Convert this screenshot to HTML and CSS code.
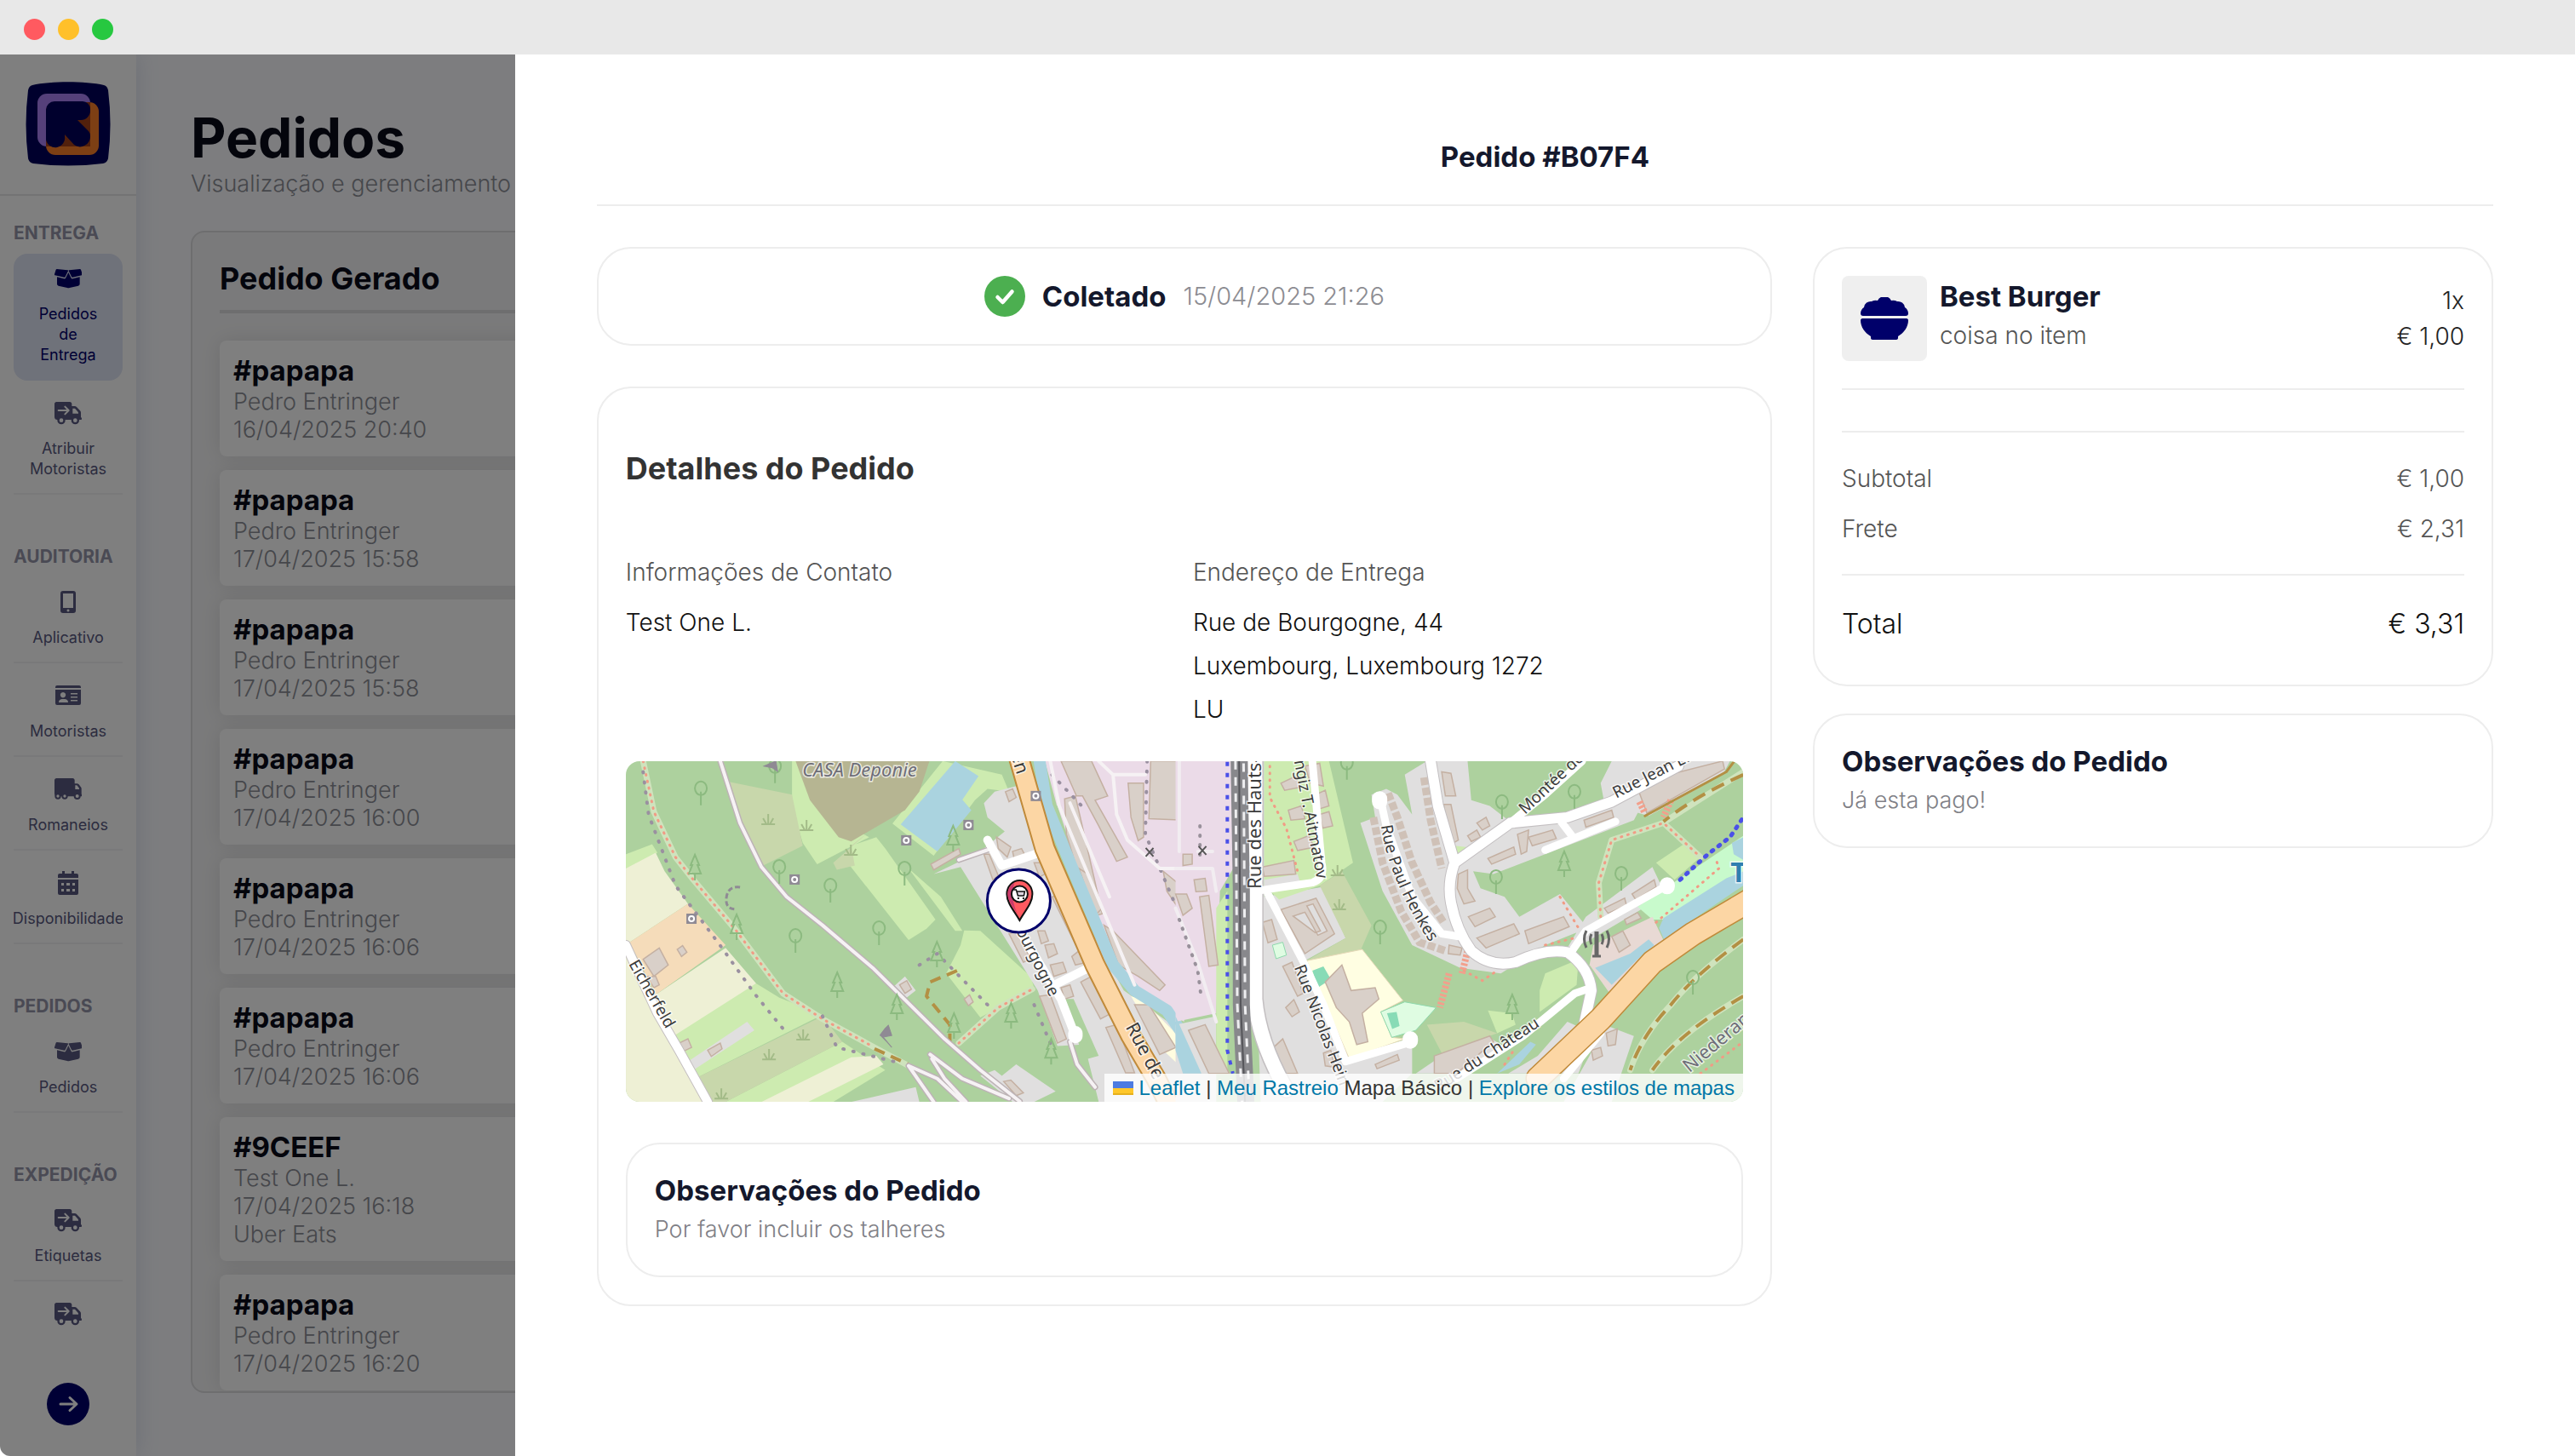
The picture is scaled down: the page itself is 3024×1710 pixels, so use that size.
FILE: index.html
```html
<!DOCTYPE html>
<html lang="pt">
<head>
<meta charset="utf-8">
<meta name="viewport" content="width=device-width, initial-scale=1">
<title>Pedidos</title>
<link rel="stylesheet" href="styles.css">
</head>
<body>
<svg class="sprite" aria-hidden="true">
  <symbol id="i-box" viewBox="24 21 96 96"><path d="M32 36l38 4c2 0 3 1 2 3L62 63c-1 2-2 2-4 2l-32-7c-2 0-3-2-2-4l5-16c1-1 2-2 3-2zM114 36l-38 4c-2 0-3 1-2 3l10 20c1 2 2 2 4 2l32-7c2 0 3-2 2-4l-5-16c-1-1-2-2-3-2z"/><path d="M33 64l24 6c3 1 5 0 6-2l10-20 10 20c1 2 3 3 6 2l24-6v24c0 4-2 6-5 7l-31 7c-3 1-5 1-8 0l-31-7c-3-1-5-3-5-7z"/></symbol>
  <symbol id="i-ship" viewBox="24 30 96 96"><path d="M31 39h47c4 0 7 3 7 7v8h10c3 0 5 1 7 3l12 13c2 2 3 4 3 7v17c4 0 4 8 0 8h-7H34c-6 0-10-4-10-10V46c0-4 3-7 7-7z"/><path d="M88 62h8l12 14v4H88z" fill="#fff"/><path d="M38 69h34M61 56l13 13-13 13" fill="none" stroke="#fff" stroke-width="6" stroke-linecap="round" stroke-linejoin="round"/><circle cx="48" cy="104" r="14"/><circle cx="97" cy="104" r="14"/><circle cx="48" cy="104" r="7" fill="#fff"/><circle cx="97" cy="104" r="7" fill="#fff"/></symbol>
  <symbol id="i-truck" viewBox="24 30 96 96"><path d="M31 39h57c4 0 7 3 7 7v12h8c3 0 5 1 7 3l6 8c2 2 3 4 3 7v19c4 0 4 8 0 8H34c-6 0-10-4-10-10V46c0-4 3-7 7-7z"/><path d="M97 64h6l8 10v4H97z" fill="#fff"/><circle cx="36" cy="102" r="11"/><circle cx="60" cy="102" r="11"/><circle cx="104" cy="102" r="12"/><g fill="#fff"><circle cx="36" cy="102" r="5"/><circle cx="60" cy="102" r="5"/><circle cx="104" cy="102" r="6"/></g></symbol>
  <symbol id="i-phone" viewBox="0 0 32 32"><path fill-rule="evenodd" d="M10 3h12a3 3 0 0 1 3 3v20a3 3 0 0 1-3 3H10a3 3 0 0 1-3-3V6a3 3 0 0 1 3-3zm0 3v17h12V6zm6 18.500a1.500 1.500 0 1 0 .01 0z"/></symbol>
  <symbol id="i-card" viewBox="0 0 32 32"><path fill-rule="evenodd" d="M3 4h26a2 2 0 0 1 2 2v1H1V6a2 2 0 0 1 2-2zM1 9h30v16a2 2 0 0 1-2 2H3a2 2 0 0 1-2-2zm9 3a3.200 3.200 0 1 0 .01 0zM5 24h11c0-3-2-4-4-4H9c-2 0-4 1-4 4zm14-11v1.500h8V13zm0 4v1.500h8V17zm0 4v1.500h8V21z"/></symbol>
  <symbol id="i-cal" viewBox="0 0 32 32"><path fill-rule="evenodd" d="M9 2h3v3h8V2h3v3h3a2 2 0 0 1 2 2v3H4V7a2 2 0 0 1 2-2h3zM4 12h24v16a2 2 0 0 1-2 2H6a2 2 0 0 1-2-2zm4 4v3h3v-3zm6 0v3h4v-3zm7 0v3h3v-3zM8 23v3h3v-3zm6 0v3h4v-3zm7 0v3h3v-3z"/></symbol>
</svg>

<header class="titlebar">
  <span class="dot dot-close"></span><span class="dot dot-min"></span><span class="dot dot-max"></span>
</header>

<div class="app">
  <aside class="sidebar">
    <div class="brand">
      <svg class="logo" viewBox="0 0 100 100" role="img" aria-label="Logo">
        <path d="M8 4C30-1 70-1 92 4q4 1 5 6 5 40 0 80-1 5-6 6-41 5-82 0-5-1-6-6-5-40 0-80 1-5 5-6z" fill="#00005a"/>
        <rect x="14" y="14" width="62" height="62" rx="11" fill="#aa80f4"/>
        <rect x="24" y="24" width="62" height="62" rx="11" fill="#fa7e28"/>
        <path d="M24 35a11 11 0 0 1 11-11h41v52H24z" fill="#a44018"/>
        <path d="M34 23h33a9 9 0 0 1 9 9v2a11 11 0 0 1-11 11h-4L74 58a9 9 0 0 1 2 6 12 12 0 0 1-19 10L46 62v2a11 11 0 0 1-22 4V33a10 10 0 0 1 10-10z" fill="#00005a"/>
      </svg>
    </div>
    <nav class="nav">
      <section class="nav-group">
        <h2 class="nav-title">ENTREGA</h2>
        <a class="nav-item active" href="#"><svg class="icon"><use href="#i-box"/></svg><span>Pedidos<br>de<br>Entrega</span></a>
        <a class="nav-item" href="#"><svg class="icon"><use href="#i-ship"/></svg><span>Atribuir<br>Motoristas</span></a>
      </section>
      <section class="nav-group">
        <h2 class="nav-title">AUDITORIA</h2>
        <a class="nav-item" href="#"><svg class="icon"><use href="#i-phone"/></svg><span>Aplicativo</span></a>
        <a class="nav-item" href="#"><svg class="icon"><use href="#i-card"/></svg><span>Motoristas</span></a>
        <a class="nav-item" href="#"><svg class="icon"><use href="#i-truck"/></svg><span>Romaneios</span></a>
        <a class="nav-item" href="#"><svg class="icon"><use href="#i-cal"/></svg><span>Disponibilidade</span></a>
      </section>
      <section class="nav-group">
        <h2 class="nav-title">PEDIDOS</h2>
        <a class="nav-item" href="#"><svg class="icon"><use href="#i-box"/></svg><span>Pedidos</span></a>
      </section>
      <section class="nav-group">
        <h2 class="nav-title">EXPEDIÇÃO</h2>
        <a class="nav-item" href="#"><svg class="icon"><use href="#i-ship"/></svg><span>Etiquetas</span></a>
        <a class="nav-item" href="#"><svg class="icon"><use href="#i-ship"/></svg></a>
      </section>
    </nav>
    <div class="sidebar-foot">
      <button class="expand" type="button" aria-label="Expandir">
        <svg viewBox="0 0 50 50" width="50" height="50"><path d="M16 25h18M27 17.500l8 7.500-8 7.500" fill="none" stroke="#fff" stroke-width="3" stroke-linecap="round" stroke-linejoin="round"/></svg>
      </button>
    </div>
  </aside>

  <main class="main">
    <h1 class="page-title">Pedidos</h1>
    <p class="page-sub">Visualização e gerenciamento dos pedidos</p>
    <section class="column">
      <h2 class="column-title">Pedido Gerado</h2>
      <article class="order"><h3>#papapa</h3><p>Pedro Entringer</p><p>16/04/2025 20:40</p></article>
      <article class="order"><h3>#papapa</h3><p>Pedro Entringer</p><p>17/04/2025 15:58</p></article>
      <article class="order"><h3>#papapa</h3><p>Pedro Entringer</p><p>17/04/2025 15:58</p></article>
      <article class="order"><h3>#papapa</h3><p>Pedro Entringer</p><p>17/04/2025 16:00</p></article>
      <article class="order"><h3>#papapa</h3><p>Pedro Entringer</p><p>17/04/2025 16:06</p></article>
      <article class="order"><h3>#papapa</h3><p>Pedro Entringer</p><p>17/04/2025 16:06</p></article>
      <article class="order"><h3>#9CEEF</h3><p>Test One L.</p><p>17/04/2025 16:18</p><p>Uber Eats</p></article>
      <article class="order"><h3>#papapa</h3><p>Pedro Entringer</p><p>17/04/2025 16:20</p></article>
    </section>
  </main>

  <div class="backdrop"></div>

  <section class="drawer" role="dialog" aria-labelledby="drawer-title">
    <h2 class="drawer-title" id="drawer-title">Pedido #B07F4</h2>
    <div class="drawer-grid">
      <div class="left">
        <div class="card status">
          <svg class="check" viewBox="0 0 48 48"><circle cx="24" cy="24" r="24" fill="#4caf50"/><path d="M15.500 25l6 6 11-12.500" fill="none" stroke="#fff" stroke-width="4.500" stroke-linecap="round" stroke-linejoin="round"/></svg>
          <strong>Coletado</strong>
          <time datetime="2025-04-15T21:26">15/04/2025 21:26</time>
        </div>

        <div class="card details">
          <h3 class="details-title">Detalhes do Pedido</h3>
          <div class="info">
            <div><h4>Informações de Contato</h4><p>Test One L.</p></div>
            <div><h4>Endereço de Entrega</h4><p>Rue de Bourgogne, 44</p><p>Luxembourg, Luxembourg 1272</p><p>LU</p></div>
          </div>

          <div class="map">
            <svg class="map-canvas" viewBox="0 0 1311 400" preserveAspectRatio="xMidYMid slice" role="img" aria-label="Mapa">
              <defs>
                <g id="t-round" fill="none" stroke="#8cba80" stroke-width="2"><ellipse cx="0" cy="-8" rx="7" ry="8"/><path d="M0-4V12"/></g>
                <g id="t-pine" fill="none" stroke="#8cba80" stroke-width="2"><path d="M0-16L-5-4h2L-7 6H7L3-4h2zM0 6v8"/></g>
                <g id="t-grass" fill="none" stroke="#a3bb88" stroke-width="2"><path d="M-8 6H8M0 6V-6M-2 6l-4-7M2 6l4-7"/></g>
                <g id="t-sq"><rect x="-6" y="-6" width="12" height="12" fill="#8f8a94"/><circle r="3" fill="none" stroke="#fff" stroke-width="2"/></g>
                <path id="p-henkes" d="M886 76Q896 144 952 226"/>
              </defs>
              <rect width="1311" height="400" fill="#add19e"/>

              <!-- western half -->
              <g class="geo" transform="translate(-5 -14) scale(.4209 .3333)">
                <path fill="#cdebb0" d="M12 370L85 335 100 365 12 425zM140 1000L375 825 440 875 560 935 205 1160zM290 1242L615 1030 735 1130 590 1242zM475 42H525L600 250 690 310 545 405 505 330 475 200zM640 340L710 310 735 350 875 600 850 632 800 672 630 400zM955 638L1000 640 1140 800 1150 840 1000 945 905 790 945 690zM895 42L1060 90 1080 150 1020 140 985 180 870 375 755 262zM800 420L890 520 950 640 930 640z"/>
                <path fill="#eef0d5" d="M12 420L95 365 120 430 185 545 22 680H12zM12 700L95 865 290 700 375 825 145 1010 245 1242H12zM390 1242L640 1085 710 1080 730 1110 520 1242z"/>
                <path fill="#f5dcba" d="M22 680L185 545 290 690 95 865 70 800z"/>
                <path fill="#c8d7ab" d="M205 1160L560 940 615 1030 290 1242H240zM300 115L475 160 505 340 395 410 345 300zM690 290L640 340 650 410 600 425 590 400z"/>
                <path fill="#b6b592" d="M485 42H858L830 150 790 215 640 325 605 310 525 180z"/>
                <path fill="#aad3df" d="M930 42L995 95 950 178 975 215 880 360 778 265z"/>
                <path fill="#e0dfdf" d="M1100 130L1040 150 1010 190 1020 240 1068 290 1010 350 935 400 870 440 945 415 1160 850 1215 1045 1290 1040 1230 880 1260 880 1330 1080 1300 1090 1330 1242H1568V1000L1400 850 1180 350zM1000 1150L1040 1130 1060 1150 1100 1110 1210 1205 1150 1242H1090zM640 1242L820 1190 830 1242zM185 1100L350 960 370 990 200 1130zM755 840L790 800 820 850 790 880z"/>
                <path fill="#ebdbe8" d="M1180 42H1568V960L1480 880 1390 790 1260 420z"/>
                <path fill="#add19e" d="M1190 180L1215 200 1270 410 1255 420zM1240 900L1300 1030 1280 1060z"/>
                <path fill="#fffde0" d="M1420 870L1450 880 1568 1030V1130L1510 1060z"/>
                <g fill="#d9d0c9" stroke="#c4b0a2" stroke-width="1.500">
                  <path d="M1225 42H1310L1355 165 1320 180 1410 380 1380 395 1330 270 1285 165 1268 165zM1475 42H1568V250L1470 245zM1412 120H1455V310L1440 322 1420 240zM1235 175L1265 165 1340 580 1310 590 1240 300zM1345 620L1370 640 1515 830 1500 850 1440 800 1385 760zM1275 420L1300 440 1340 560 1320 585zM1510 430L1568 490V590L1520 500zM1430 900L1470 900 1545 1050 1500 1075z"/>
                  <path d="M1045 310L1085 345 1075 380 1050 350zM1090 360L1115 350 1125 375 1095 390zM1070 150L1090 140 1100 170 1080 185zM1010 370L1025 370 1050 445 1035 460zM1150 400L1170 400 1180 440 1165 450zM1160 640L1180 640 1190 675 1170 685zM1180 690L1205 685 1215 720 1190 735zM1195 760L1230 750 1240 785 1205 800zM1080 650L1105 640 1140 740 1120 750zM1255 730L1285 700 1300 750 1265 760zM1165 870L1195 865 1240 1020 1215 1035zM1225 840L1250 830 1260 870 1235 880zM1280 820L1310 800 1365 930 1335 950zM1350 980L1380 970 1430 1140 1405 1140zM1200 520L1220 515 1290 690 1270 700zM862 405L940 350 945 370 870 425zM60 740L105 700 130 760 90 800zM155 705L170 692 182 715 167 730zM70 800L95 800 105 830 90 840zM160 1035L185 1020 195 1050 170 1065zM775 830L795 815 808 845 790 860zM955 880L970 865 980 890 967 903zM240 1060L275 1035 280 1055 250 1082zM1065 1170L1085 1165 1120 1210 1100 1220z"/>
                </g>
                <g fill="none" stroke-linejoin="round" stroke-linecap="round">
                  <path stroke="#aad3df" stroke-width="14" d="M1165 42L1185 200 1260 430 1370 760 1430 850 1520 920 1568 1010"/>
                  <path stroke="#cfe3bd" stroke-width="7" d="M60 42L90 220 150 380 200 460 320 640 450 860 560 950 690 1040 800 1115M940 1035L1050 910 1145 845"/>
                  <path stroke="#f19b85" stroke-width="3" stroke-dasharray="1 7" d="M60 42L90 220 150 380 200 460 320 640 450 860 560 950 690 1040M940 1035L1050 910 1145 845"/>
                  <path stroke="#9a90a0" stroke-width="4" stroke-dasharray="1 11" d="M60 80L75 230 150 480 280 700 370 860 460 1000M560 940L600 1050 760 1100M830 760L880 720 1020 900M1150 900L1200 1050M1200 90L1290 210M1465 42L1460 300 1568 620"/>
                  <path stroke="#b39044" stroke-width="4" stroke-dasharray="13 8" stroke-linecap="butt" d="M935 780L860 820 850 870 915 970V1040M705 1055L800 1110"/>
                  <path stroke="#bdb3b6" stroke-width="7" d="M275 42L330 260 390 415 460 520 560 620 700 770 900 1020 1000 1130 1110 1240M860 1075L950 1160 1080 1230M865 1090L900 1160 960 1242M800 1115L870 1242M800 1115L880 1160 950 1242M1250 1030L1270 1110 1320 1190M940 390L1020 355"/>
                  <path stroke="#f6f2f4" stroke-width="4" d="M275 42L330 260 390 415 460 520 560 620 700 770 900 1020 1000 1130 1110 1240M860 1075L950 1160 1080 1230M865 1090L900 1160 960 1242M800 1115L870 1242M800 1115L880 1160 950 1242M1250 1030L1270 1110 1320 1190M940 390L1020 355M1195 42L1220 200 1340 560 1430 830M1330 42L1370 90 1460 90M1370 90L1380 230 1410 320 1500 420 1568 420M1250 190L1360 520"/>
                  <path stroke="#c4bfc0" stroke-width="12" d="M12 690L100 930 160 1060 240 1242"/>
                  <path stroke="#fff" stroke-width="10" d="M12 690L100 930 160 1060 240 1242M1020 320L1060 410 1165 365M1110 640L1225 880 1265 1010M1215 825L1310 765"/>
                  <path stroke="#fff" stroke-width="17" d="M1265 1000V1010"/>
                  <path stroke="#c08a3a" stroke-width="25" d="M1105 20L1180 350 1320 760 1420 1010 1490 1160 1530 1260"/>
                  <path stroke="#fcd6a4" stroke-width="21" d="M1105 20L1180 350 1320 760 1420 1010 1490 1160 1530 1260"/>
                </g>
              </g>

              <!-- eastern half -->
              <g class="geo" transform="translate(645 -14) scale(.4337 .3333)">
                <path fill="#ebdbe8" d="M0 42H165V400L120 500 110 930 0 960z"/>
                <path fill="#e0dfdf" d="M0 970L110 940V1242H0zM200 42H240V520L400 485 460 665 350 745 480 1090 640 1040 640 1142 560 1242H230zM500 260L540 240 530 160 570 140 600 160 640 230 620 90 680 42H790L800 180 850 200 920 270 1180 190 1260 200 1240 250 860 440 805 430 825 490 890 520 930 590 1040 510 1115 630 1000 690 880 790 770 770 640 690 560 500zM1150 120L1180 42H1500L1480 90 1280 235 1160 190zM1110 590L1290 415 1310 470 1340 500 1240 580 1110 680 1060 700zM980 1080L1060 960 1130 1000 1090 1142 900 1142zM1120 1080L1160 970 1240 1010 1180 1242H1050zM720 1080L830 1000 880 1040 800 1142H650z"/>
                <path fill="#cdebb0" d="M240 42H415L480 400 390 480 280 530 240 480zM1300 400L1380 330 1420 380 1350 460zM1000 790L1090 740 1085 830 985 925 985 850zM845 920L910 930 920 970 870 1000zM755 340L790 345 780 380 755 370zM110 560L140 500V1142H110z"/>
                <path fill="#e0dfdf" d="M240 460L330 440 340 480 240 490z"/>
                <path fill="#c8d7ab" d="M390 480L450 430 530 620 500 710 355 745 460 665zM680 970L780 960 870 1000 720 1070z"/>
                <path fill="#fffee2" stroke="#e6d9b8" d="M355 745L505 705 615 885 555 925 585 1015 620 1020 470 1090z"/>
                <path fill="#dffce2" stroke="#8fd9ad" d="M555 925L620 890 705 910 650 990 585 1015zM262 690L290 680 300 725 272 738z"/>
                <path fill="#88dbb6" d="M370 780L400 765 420 810 385 840zM572 930L598 925 606 975 586 985z"/>
                <path fill="#c8facc" d="M1250 555L1536 305V480L1330 600 1290 600z"/>
                <path fill="#e8d9d4" d="M1130 690L1290 590 1330 700 1180 870 1120 760z"/>
                <path fill="#aad3df" d="M1308 630L1320 595 1490 455 1536 430V480L1400 600 1325 680zM1135 770L1230 720 1280 670 1295 690 1250 740 1180 830zM1505 330L1536 310V390L1510 370zM0 940L70 1142H20L0 1060zM870 1142L960 1030 975 1040 930 1110z"/>
                <g fill="#d9d0c9" stroke="#c4b0a2" stroke-width="1.500">
                  <path d="M285 565L380 525 430 650 350 720zM285 120L325 95 335 135 295 145zM350 60L390 50 400 130 365 120zM380 160L405 145 415 200 390 210zM305 215L340 200 350 245 312 250zM390 230L415 220 425 270 398 278zM320 325L360 305 375 345 330 357zM235 415L320 392 325 440 240 448zM235 610L260 600 275 670 250 682zM290 765L315 750 345 860 330 870zM298 910L320 882 335 925 315 942zM265 1050L290 1020 330 1142H290zM65 520L90 515 115 760 90 765zM50 460L80 455 85 500 55 502zM20 370L45 370 45 405 20 410zM0 510L30 510 45 560 20 585zM35 990L80 970 145 1142H90zM405 820L450 760 475 850 540 840 550 880 505 930 520 1030 490 1040 470 960 435 910zM400 1070L420 1060 430 1120 405 1115z"/>
                  <path d="M720 80L745 85 758 165 730 165zM725 195L745 195 765 320 745 335zM790 305L815 285 825 310 800 325zM815 260L840 240 850 270 830 285zM925 300L955 285 950 360 935 370zM955 310L1020 285 1030 315 965 340zM1105 250L1180 215 1185 240 1110 275zM845 385L915 345 920 370 855 405zM765 440L790 425 790 490 810 535 780 545 762 490zM792 590L850 560 865 590 810 625zM815 665L915 615 930 650 840 700zM945 640L1050 590 1065 625 955 685zM1245 120L1480 42 1485 70 1275 225zM1160 560L1215 525 1220 550 1170 578zM1235 510L1295 460 1300 485 1245 530zM1215 600L1250 575 1260 595 1220 618zM1180 660L1210 640 1230 690 1200 715zM740 690L775 700 770 725 738 720zM700 1080L850 1010 860 1030 760 1142H700zM540 1110L600 1075 605 1095 545 1125zM1165 1000L1195 985 1190 1040 1170 1045zM1125 1060L1150 1050 1155 1080 1130 1095z"/>
                </g>
                <path fill="#e0dfdf" stroke="#c4b0a2" stroke-width="1.500" d="M318 588L350 574 385 655 410 640 372 545 355 552 392 640 378 646z"/>
                <g fill="none" stroke="#cfc1b7" stroke-width="9" stroke-dasharray="9 3">
                  <path d="M535 240L560 400 610 570 660 680 730 710M575 155L600 240 640 400 690 540 725 610M672 100L690 250 720 420M1030 1060L960 1142"/>
                </g>
                <g fill="none" stroke-linejoin="round" stroke-linecap="round">
                  <path stroke="#cfe3bd" stroke-width="7" d="M1150 590L1145 470 1180 320 1320 260 1420 380M1536 80L1330 250M1536 670Q1400 800 1340 900 1260 1010 1230 1130M1536 870Q1360 1000 1290 1130"/>
                  <path stroke="#f19b85" stroke-width="3" stroke-dasharray="1 7" d="M1150 590L1145 470 1180 320 1320 260 1420 380M255 60V170L300 280 330 430M780 780L830 815 870 780M1040 520L1090 630M1000 690L1080 665M1300 610L1470 420 1460 380M890 1110L920 1050M1420 1142L1536 1030"/>
                  <path stroke="#f2a08c" stroke-width="8" stroke-dasharray="3 2" stroke-linecap="butt" d="M790 710L775 790M740 790L715 910M1340 180L1320 240M1255 185L1270 225"/>
                  <path stroke="#b39044" stroke-width="4" stroke-dasharray="16 9" stroke-linecap="butt" d="M1536 670Q1400 800 1340 900 1260 1010 1230 1130M1536 870Q1360 1000 1290 1130M1536 90Q1400 170 1320 255"/>
                  <path stroke="#b39044" stroke-width="3" d="M1270 235L1490 80 1510 45"/>
                  <path stroke="#4a50e8" stroke-width="5" stroke-dasharray="2 8" d="M1365 460L1440 370 1500 310 1536 240"/>
                  <path stroke="#c3bfc1" stroke-width="20" d="M215 20V880Q225 1030 300 1200"/>
                  <path stroke="#fff" stroke-width="17" d="M215 20V880Q225 1030 300 1200"/>
                  <path stroke="#c3bfc1" stroke-width="14" d="M690 42L710 200 755 400Q735 470 745 540 760 640 800 710 850 770 920 750 1000 700 1060 715 1120 770 1125 850L1105 970M755 400L905 260 1060 240 1180 185 1360 60"/>
                  <path stroke="#fff" stroke-width="12" d="M690 42L710 200 755 400Q735 470 745 540 760 640 800 710 850 770 920 750 1000 700 1060 715 1120 770 1125 850L1105 970M755 400L905 260 1060 240 1180 185 1360 60"/>
                  <path stroke="#fff" stroke-width="9" d="M905 260L1000 160 1100 42M1040 250L1075 310M1000 355L1190 255M555 180L570 270 640 520 720 650 770 660M1070 715L1110 640 1330 480M1125 840L1080 860 940 1010 760 1160M1150 1000L1050 1160M215 500L370 470Q405 455 395 400L370 42M250 510L350 760 400 900 460 1100 640 1030"/>
                  <path stroke="#fff" stroke-width="18" d="M552 175V185M1330 478V484M635 1020V1028"/>
                  <path stroke="#f2edf1" stroke-width="4" d="M0 420H100L110 500M100 360H60M10 42V360M0 560L60 750 110 960"/>
                  <path stroke="#99919b" stroke-width="4" stroke-dasharray="1 10" d="M66 270V400M10 600L60 780 70 880"/>
                  <path stroke="#4a50e8" stroke-width="4" stroke-dasharray="5 8" stroke-linecap="butt" d="M140 45V1060L155 1142"/>
                  <path stroke="#88888c" stroke-width="20" stroke-linecap="butt" d="M172 42L178 500V900L190 1242"/>
                  <path stroke="#eeeef0" stroke-width="3" stroke-dasharray="10 9" stroke-linecap="butt" d="M162 42L167 900 180 1242M184 50L188 900 200 1242"/>
                  <path stroke="#55555a" stroke-width="2" stroke-linecap="butt" d="M172 42L176 900 188 1242"/>
                  <path stroke="#c08a3a" stroke-width="29" d="M1570 520L1400 650 1290 750 1150 950 980 1160"/>
                  <path stroke="#fcd6a4" stroke-width="26" d="M1570 520L1400 650 1290 750 1150 950 980 1160"/>
                </g>
              </g>

              <g>
                <use href="#t-round" x="88" y="40"/><use href="#t-round" x="175" y="14"/><use href="#t-round" x="180" y="132"/><use href="#t-round" x="240" y="154"/><use href="#t-round" x="297" y="204"/><use href="#t-round" x="199" y="213"/><use href="#t-round" x="327" y="134"/>
                <use href="#t-round" x="846" y="10"/><use href="#t-round" x="885" y="203"/><use href="#t-round" x="1028" y="56"/><use href="#t-round" x="1113" y="44"/><use href="#t-round" x="1021" y="144"/><use href="#t-round" x="1168" y="140"/><use href="#t-round" x="1252" y="262"/>
                <use href="#t-pine" x="81" y="126"/><use href="#t-pine" x="130" y="196"/><use href="#t-pine" x="248" y="264"/><use href="#t-pine" x="365" y="228"/><use href="#t-pine" x="318" y="290"/><use href="#t-pine" x="385" y="312"/><use href="#t-pine" x="452" y="300"/><use href="#t-pine" x="499" y="342"/><use href="#t-pine" x="384" y="92"/><use href="#t-pine" x="1101" y="122"/><use href="#t-pine" x="1040" y="290"/>
                <use href="#t-grass" x="167" y="68"/><use href="#t-grass" x="212" y="75"/><use href="#t-grass" x="264" y="104"/><use href="#t-grass" x="208" y="321"/><use href="#t-grass" x="168" y="344"/><use href="#t-grass" x="112" y="390"/><use href="#t-grass" x="835" y="128"/><use href="#t-grass" x="837" y="168"/>
                <use href="#t-sq" x="198" y="139"/><use href="#t-sq" x="77" y="185"/><use href="#t-sq" x="329" y="93"/><use href="#t-sq" x="402" y="75"/><use href="#t-sq" x="481" y="41"/>
                <path d="M134 148q-14-2-16 12t12 14" fill="none" stroke="#8f8a94" stroke-width="3" stroke-dasharray="6 3"/>
                <path d="M298 322l6-8 4-4 4 12-10 2 10 12M162 6l14-6 2 12-6-4z" fill="#8f8a94" stroke="#8f8a94"/>
                <path d="M610 102l9 10m0-10l-9 10M672 100l9 10m0-10l-9 10" stroke="#555" stroke-width="2"/>
                <g fill="none" stroke="#666" stroke-width="3"><path stroke-width="5" d="M1139 200v28"/><path d="M1134 229h10M1133 203q-3 6 0 12M1127 199q-5 10 0 20M1145 203q3 6 0 12M1151 199q5 10 0 20"/></g>
              </g>

              <g class="map-label">
                <text class="lg soft" transform="translate(207 18)" font-style="italic">CASA Deponie</text>
                <text transform="translate(3 238) rotate(60)">Eicherfeld</text>
                <text transform="translate(452 188) rotate(63)">Bourgogne</text>
                <text class="lg" transform="translate(586 312) rotate(62)">Rue de</text>
                <text class="lg" transform="translate(451 -8) rotate(72)">en</text>
                <text class="lg" transform="translate(745 150) rotate(-90)">Rue des Hauts-</text>
                <text transform="translate(784 0) rotate(79)">ngiz T. Aitmatov</text>
                <text><textPath href="#p-henkes">Rue Paul Henkes</textPath></text>
                <text transform="translate(784 242) rotate(69)">Rue Nicolas Hein</text>
                <text transform="translate(1055 63) rotate(-43)">Montée de</text>
                <text transform="translate(1162 44) rotate(-27)">Rue Jean En</text>
                <text transform="translate(954 388) rotate(-33)">Rue du Château</text>
                <text class="lg soft" transform="translate(1248 366) rotate(-40)">Niederan</text>
                <text class="stop" transform="translate(1296 142)">T</text>
              </g>

              <g class="marker">
                <circle cx="461" cy="164" r="37" fill="#fff" stroke="#00006a" stroke-width="3"/>
                <path d="M462 187c-6-11-15-20-15-31a15 16 0 0 1 30 0c0 11-9 20-15 31z" fill="#ff5a60" stroke="#111" stroke-width="2"/>
                <path d="M460 180c-5-8-12-16-12-24a14 15 0 0 1 8-13c-4 12-2 26 4 37z" fill="#c93a6c"/>
                <circle cx="462" cy="156" r="9.500" fill="#fff" stroke="#111" stroke-width="2"/>
                <path d="M455 151h3l2 7h7l1-5h-9" fill="#ddd5e0" stroke="#111" stroke-width="1.500"/><path d="M460 160.500h1v1h-1zM466 160.500h1v1h-1z" stroke="#111"/>
              </g>
            </svg>
            <div class="attribution">
              <svg class="flag" viewBox="0 0 24 16" width="24" height="16"><path fill="#4c7be1" d="M0 0h24v8H0z"/><path fill="#ffc72a" d="M0 8h24v6H0z"/><path fill="#e6b01e" d="M0 14h24v2H0z"/></svg>
              <a href="#">Leaflet</a> | <a href="#">Meu Rastreio</a> Mapa Básico | <a href="#">Explore os estilos de mapas</a>
            </div>
          </div>

          <div class="card notes"><h3>Observações do Pedido</h3><p>Por favor incluir os talheres</p></div>
        </div>
      </div>

      <div class="right">
        <div class="card summary">
          <div class="product">
            <div class="thumb">
              <svg viewBox="0 0 56 50" width="56" height="50" fill="#00006a"><path d="M3 22c-2 0-3-1-3-3a9 9 0 0 1 4-7 8 8 0 0 1 9-7 9 8 0 0 1 7-1 9 9 0 0 1 16 0 9 8 0 0 1 7 1 8 8 0 0 1 9 7 9 9 0 0 1 4 7c0 2-1 3-3 3z"/><path d="M2 25h52c1 0 2 1 2 2 0 8-5 15-12 19v2c0 1-1 2-2 2H14c-1 0-2-1-2-2v-2C5 42 0 35 0 27c0-1 1-2 2-2z"/></svg>
            </div>
            <div class="product-name"><h3>Best Burger</h3><p>coisa no item</p></div>
            <div class="product-price"><p>1x</p><p>€ 1,00</p></div>
          </div>
          <dl class="totals">
            <div><dt>Subtotal</dt><dd>€ 1,00</dd></div>
            <div><dt>Frete</dt><dd>€ 2,31</dd></div>
            <div class="grand"><dt>Total</dt><dd>€ 3,31</dd></div>
          </dl>
        </div>
        <div class="card notes"><h3>Observações do Pedido</h3><p>Já esta pago!</p></div>
      </div>
    </div>
  </section>
</div>
</body>
</html>
```
FILE: styles.css
```css
* { box-sizing: border-box; }
h1, h2, h3, h4, p, dl, dd { margin: 0; }

body {
  margin: 0;
  height: 100vh;
  display: flex;
  flex-direction: column;
  overflow: hidden;
  background: #fff;
  color: #14182c;
  font-family: "Inter", "Liberation Sans", sans-serif;
  font-weight: 300;
  font-size: 28px;
  line-height: 40px;
}

.sprite { display: none; }

.titlebar {
  flex: none;
  height: 64px;
  padding: 4px 28px 0;
  display: flex;
  align-items: center;
  gap: 15px;
  background: #e8e8e8;
}
.dot { width: 25px; height: 25px; border-radius: 50%; }
.dot-close { background: #ff5a60; }
.dot-min { background: #ffc02a; }
.dot-max { background: #27c840; }

.app {
  position: relative;
  flex: 1;
  min-height: 0;
  display: flex;
  overflow: hidden;
  background: #fafbff;
  border-radius: 0 0 0 12px;
}

/* sidebar */
.sidebar {
  flex: none;
  width: 160px;
  display: flex;
  flex-direction: column;
  background: #fff;
  box-shadow: 0 0 24px rgba(120, 140, 180, .25);
}
.brand {
  padding: 32px 30px;
  border-bottom: 2px solid #e6e6e8;
}
.logo { display: block; width: 100px; height: 100px; }
.nav {
  flex: 1;
  min-height: 0;
  overflow: hidden;
  padding: 32px 16px 0;
  display: flex;
  flex-direction: column;
  gap: 61px;
}
.nav-group { flex: none; }
.nav-title {
  margin-bottom: 12px;
  color: #9494a8;
  font-size: 21px;
  font-weight: 700;
  line-height: 24px;
}
.nav-item {
  display: flex;
  flex-direction: column;
  align-items: center;
  gap: 14px;
  padding: 13px 0 16px;
  border-bottom: 2px solid #f2f2f4;
  overflow: hidden;
  color: #585880;
  font-size: 18px;
  font-weight: 400;
  line-height: 24px;
  text-align: center;
  text-decoration: none;
}
.nav-item + .nav-item { margin-top: 9px; }
.nav-item.active {
  background: #dfe4f4;
  border-color: transparent;
  border-radius: 16px;
  color: #00006a;
}
.icon { width: 32px; height: 32px; fill: currentColor; }
.sidebar-foot {
  flex: none;
  height: 136px;
  padding-bottom: 36px;
  display: flex;
  align-items: flex-end;
  justify-content: center;
}
.expand {
  width: 50px;
  height: 50px;
  padding: 0;
  border: 0;
  border-radius: 50%;
  background: #00006a;
}
.expand svg { display: block; }

/* orders board */
.main {
  flex: 1;
  min-width: 0;
  display: flex;
  flex-direction: column;
  padding: 58px 64px 74px;
}
.page-title {
  color: #080a18;
  font-size: 64px;
  font-weight: 700;
  line-height: 80px;
}
.page-sub {
  margin-bottom: 42px;
  color: #8c8e96;
  font-size: 27px;
  line-height: 27px;
  white-space: nowrap;
}
.column {
  flex: 1;
  min-height: 0;
  overflow: hidden;
  display: flex;
  flex-direction: column;
  gap: 16px;
  padding: 32px;
  border: 2px solid #dcdcdf;
  border-radius: 16px;
  background: #f5f5f6;
}
.column-title {
  margin-bottom: 16px;
  padding-bottom: 15px;
  border-bottom: 4px solid #dcdcdf;
  color: #080a18;
  font-size: 36px;
  font-weight: 700;
  line-height: 44px;
}
.order {
  flex: none;
  padding: 15px 16px;
  border-radius: 8px;
  background: #fff;
  box-shadow: 0 0 24px rgba(0, 0, 0, .1);
  color: #8c8e96;
  font-size: 27px;
  line-height: 33px;
}
.order h3 {
  color: #080a18;
  font-size: 33px;
  font-weight: 700;
  line-height: 40px;
}

.backdrop {
  position: absolute;
  inset: 0;
  background: rgba(0, 0, 0, .5);
}

/* order drawer */
.drawer {
  position: absolute;
  top: 0;
  right: 0;
  bottom: 0;
  width: 80%;
  padding: 100px 96px 96px;
  overflow: hidden;
  background: #fff;
}
.drawer-title {
  margin-bottom: 48px;
  padding-bottom: 36px;
  border-bottom: 2px solid #ededed;
  font-size: 33px;
  font-weight: 700;
  text-align: center;
}
.drawer-grid {
  display: grid;
  grid-template-columns: minmax(0, 19fr) minmax(0, 11fr);
  gap: 48px;
  align-items: start;
}
.left { display: flex; flex-direction: column; gap: 48px; }
.right { display: flex; flex-direction: column; gap: 32px; }

.card {
  padding: 32px;
  border: 2px solid #ededed;
  border-radius: 40px;
}
.card h3 { font-size: 33px; font-weight: 700; }

.status {
  display: flex;
  align-items: center;
  justify-content: center;
  gap: 20px;
}
.status strong { font-size: 33px; font-weight: 700; }
.status time { color: #8c8c92; font-size: 29px; }
.check { width: 48px; height: 48px; }

.details { padding-top: 72px; }
.card .details-title {
  margin-bottom: 80px;
  color: #333;
  font-size: 36px;
  line-height: 44px;
}
.info {
  display: grid;
  grid-template-columns: 1fr 1fr;
  gap: 20px;
  margin-bottom: 35px;
}
.info h4 {
  margin-bottom: 14px;
  color: #555;
  font-size: 28px;
  font-weight: 300;
}
.info p { color: #111; line-height: 51px; }

.map {
  position: relative;
  height: 400px;
  margin-bottom: 48px;
  overflow: hidden;
  border-radius: 16px;
}
.map-canvas { display: block; width: 100%; height: 100%; }
.geo path { vector-effect: non-scaling-stroke; }
.map-label {
  fill: #3c3c3c;
  stroke: #fff;
  stroke-width: 3px;
  stroke-opacity: .7;
  paint-order: stroke;
  font-family: "Noto Sans", sans-serif;
  font-size: 19px;
  font-weight: 400;
}
.map-label .lg { font-size: 22px; }
.map-label .soft { fill: #6e6e78; }
.map-label .stop { fill: #2f7fb0; font-size: 33px; font-weight: 700; }
.attribution {
  position: absolute;
  right: 0;
  bottom: 0;
  padding: 0 10px;
  background: rgba(255, 255, 255, .8);
  color: #333;
  font: 24px/33px "Liberation Sans", Arial, sans-serif;
}
.attribution a { color: #0078a8; text-decoration: none; }

.notes { padding: 34px 32px; }
.notes p { margin-top: 6px; color: #808086; font-size: 27px; }

.summary { padding-bottom: 51px; }
.product {
  display: flex;
  gap: 15px;
  padding-bottom: 32px;
  border-bottom: 2px solid #ededed;
}
.thumb {
  flex: none;
  width: 100px;
  height: 100px;
  display: flex;
  align-items: center;
  justify-content: center;
  border-radius: 8px;
  background: #efefef;
}
.product-name { flex: 1; padding-top: 4px; }
.product-name p { margin-top: 6px; color: #555; }
.product-price {
  align-self: center;
  color: #222;
  line-height: 42px;
  text-align: right;
}
.totals {
  margin-top: 48px;
  padding-top: 34px;
  border-top: 2px solid #ededed;
  color: #555;
}
.totals > div { display: flex; justify-content: space-between; }
.totals > div + div { margin-top: 19px; }
.totals > .grand {
  margin-top: 33px;
  padding-top: 37px;
  border-top: 2px solid #ededed;
  color: #111;
  font-size: 32px;
}
```
